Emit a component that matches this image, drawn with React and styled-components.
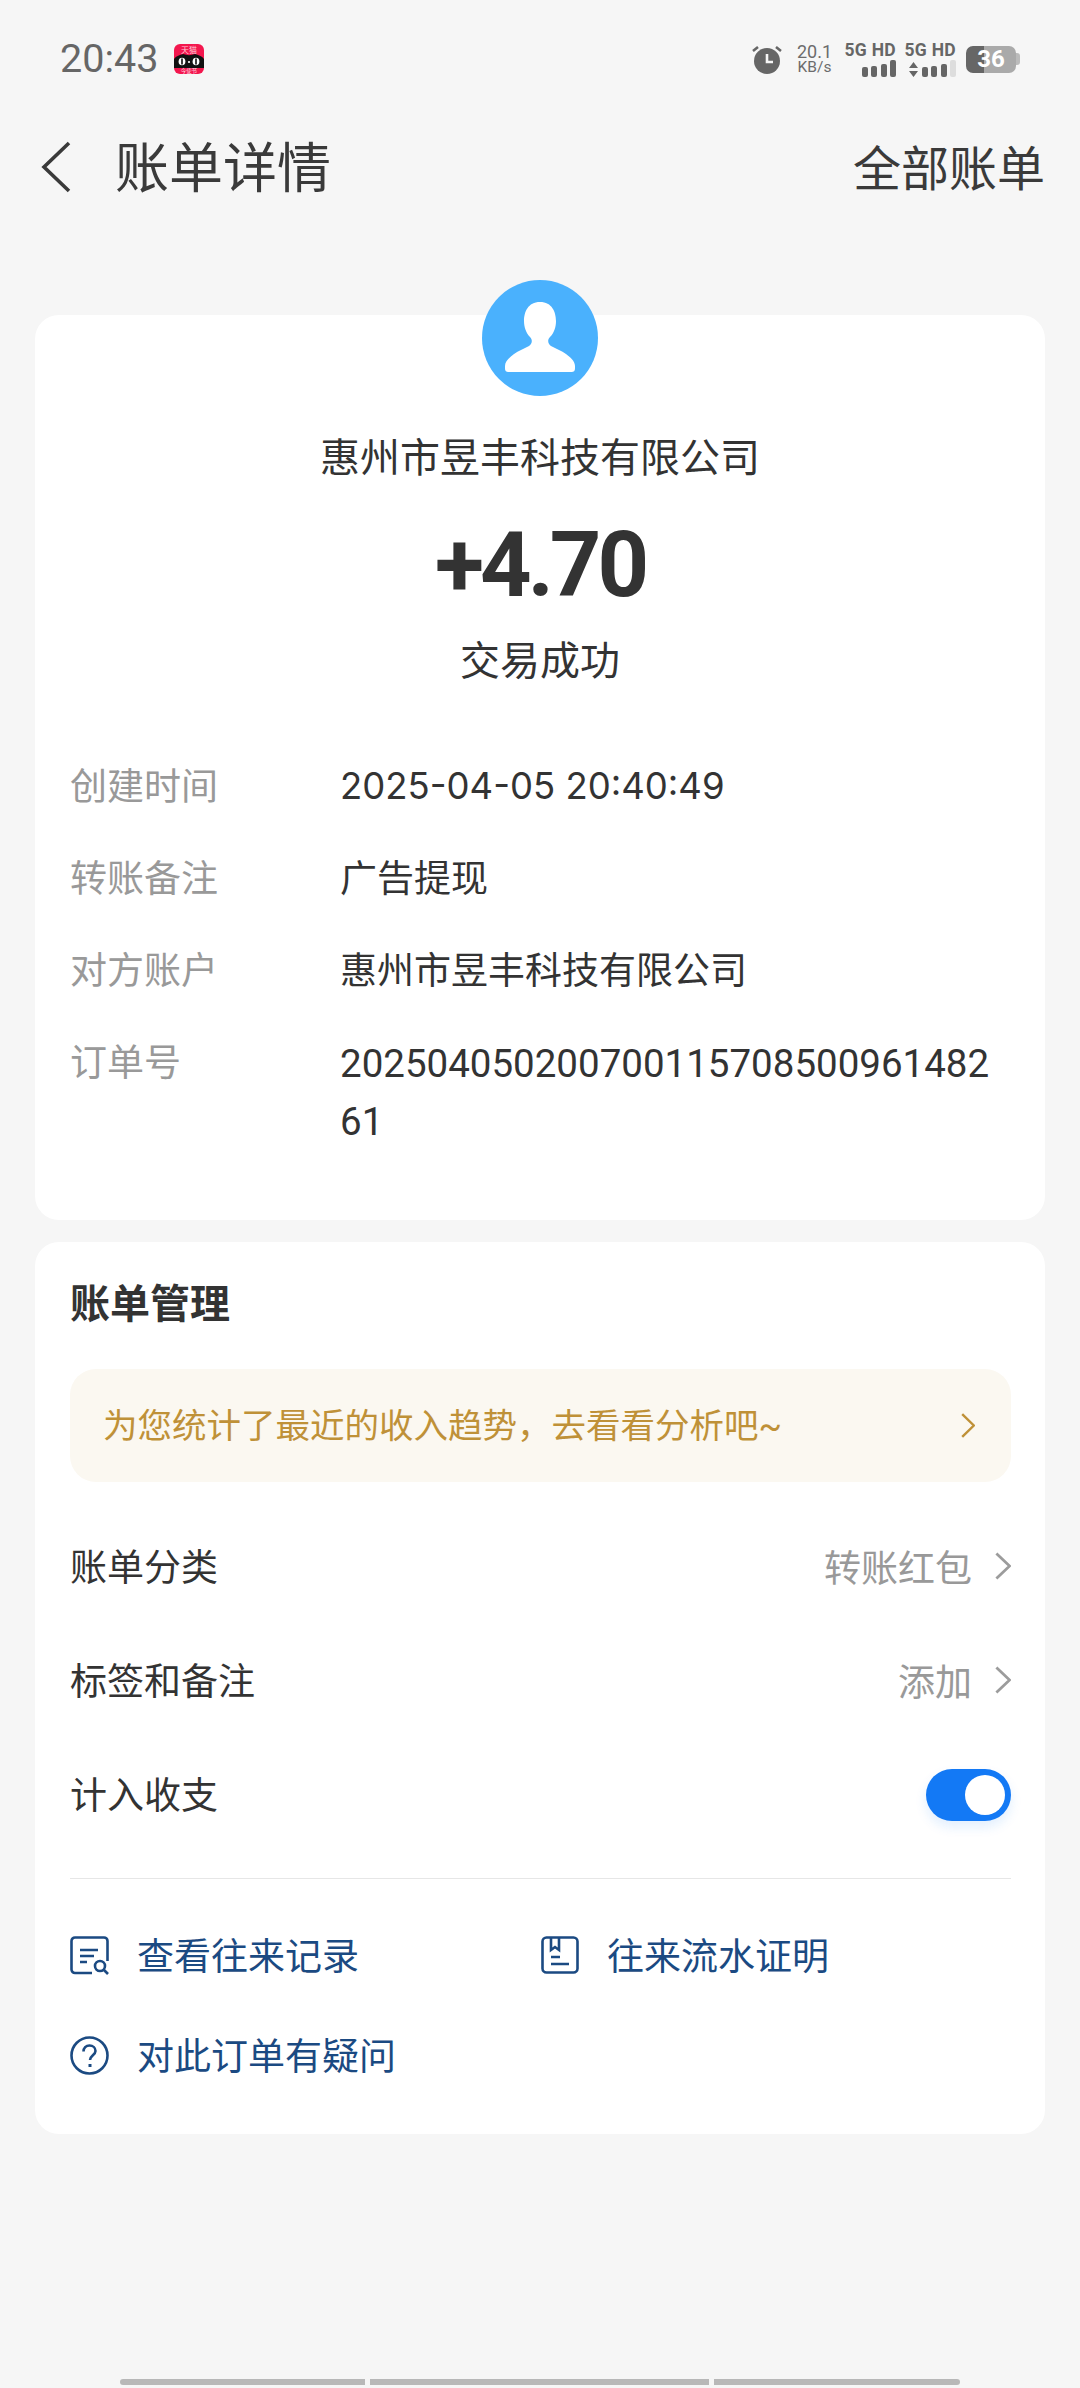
import styled, { createGlobalStyle } from 'styled-components';

const GlobalStyle = createGlobalStyle`
  html, body {
    margin: 0;
    padding: 0;
    background: #f6f6f6;
  }
  * {
    box-sizing: border-box;
  }
  body {
    font-family: Roboto, "Noto Sans CJK SC", sans-serif;
    color: #333;
  }
`

const Page = styled.div`
  width: 1080px;
  height: 2388px;
  display: flex;
  flex-direction: column;
  background: #f6f6f6;
`

const StatusBar = styled.div`
  height: 118px;
  flex-shrink: 0;
  display: flex;
  align-items: center;
  justify-content: space-between;
  padding: 0 60px 0 60px;
`

const StatusLeft = styled.div`
  display: flex;
  align-items: center;
  gap: 16px;
`

const Clock = styled.span`
  font-size: 39.5px;
  line-height: 46px;
  color: #666;
`

const StatusRight = styled.div`
  display: flex;
  align-items: center;
`

const Speed = styled.div`
  margin-left: 14px;
  width: 37px;
  display: flex;
  flex-direction: column;
  color: #6c6c6c;
  font-size: 18px;
  line-height: 17px;
  text-align: center;

  small {
    font-size: 15.5px;
    line-height: 15px;
  }
`

const Network = styled.div`
  width: 48px;
  margin-left: ${props => props.$gap}px;
  display: flex;
  flex-direction: column;
  align-items: flex-end;
  gap: 2px;
`

const NetworkLabel = styled.span`
  font-size: 17.5px;
  line-height: 16px;
  font-weight: 700;
  letter-spacing: 0.3px;
  color: #666;
  white-space: nowrap;
`

const Signal = styled.div`
  display: flex;
  align-items: flex-end;
  gap: 3.5px;
  height: 17px;
`

const SignalBar = styled.i`
  display: block;
  width: 6px;
  height: ${props => props.$h}px;
  border-radius: 2px;
  background: ${props => (props.$off ? '#ddd' : '#666')};
`

const Battery = styled.div`
  margin-left: 10px;
  display: flex;
  align-items: center;
`

const BatteryBody = styled.div`
  width: 50px;
  height: 27px;
  border-radius: 7px;
  background: linear-gradient(90deg, #666 36%, #aaa 36%);
  color: #fff;
  font-size: 24px;
  font-weight: 700;
  line-height: 27px;
  text-align: center;
`

const BatteryTip = styled.i`
  display: block;
  width: 4px;
  height: 12px;
  border-radius: 0 3px 3px 0;
  background: #bbb;
`

const NavBar = styled.div`
  height: 98px;
  flex-shrink: 0;
  display: flex;
  align-items: center;
  padding: 0 35px 0 41px;
`

const Title = styled.div`
  margin-left: 44px;
  flex: 1;
  font-size: 54px;
  line-height: 70px;
  padding-top: 5px;
  color: #3a3a3a;
`

const NavAction = styled.div`
  font-size: 48px;
  line-height: 60px;
  padding-top: 5px;
  color: #3a3a3a;
`

const Card = styled.div`
  position: relative;
  margin: 0 35px;
  border-radius: 24px;
  background: #fff;
`

const DetailCard = styled(Card)`
  margin-top: 99px;
  height: 905px;
  padding: 116px 35px 0;
`

const ManageCard = styled(Card)`
  margin-top: 22px;
  height: 892px;
  padding: 35px 34px 0 35px;
`

const Avatar = styled.div`
  position: absolute;
  top: -35px;
  left: 447px;
  width: 116px;
  height: 116px;
`

const Summary = styled.div`
  display: flex;
  flex-direction: column;
  align-items: center;
`

const Payer = styled.div`
  font-size: 40px;
  line-height: 56px;
`

const Amount = styled.div`
  margin-top: 29px;
  font-size: 90px;
  line-height: 100px;
  font-weight: 700;
  letter-spacing: -4px;
`

const TradeStatus = styled.div`
  margin-top: 18px;
  font-size: 40px;
  line-height: 56px;
`

const InfoList = styled.div`
  margin-top: 69px;
  display: flex;
  flex-direction: column;
  gap: 34px;
`

const InfoRow = styled.div`
  display: grid;
  grid-template-columns: 270px 1fr;
  font-size: 37px;
  line-height: 58px;
`

const InfoLabel = styled.div`
  color: #999;
`

const InfoValue = styled.div`
  color: #333;
  word-break: break-all;
  padding-right: 12px;
`

const DateValue = styled(InfoValue)`
  font-family: Inter, sans-serif;
  font-size: 36.5px;
  line-height: 55px;
`

const OrderValue = styled(InfoValue)`
  font-size: 38.5px;
`

const SectionTitle = styled.div`
  font-size: 40px;
  line-height: 56px;
  font-weight: 700;
`

const Banner = styled.div`
  margin-top: 36px;
  height: 113px;
  padding: 0 36px 0 33px;
  border-radius: 26px;
  display: flex;
  align-items: center;
  justify-content: space-between;
  background: #fbf8f1;
  color: #bf9138;
  font-size: 34.5px;

  span {
    padding-bottom: 6px;
  }
`

const Rows = styled.div`
  margin-top: 28px;
`

const Row = styled.div`
  height: 114px;
  display: flex;
  align-items: center;
  justify-content: space-between;
  font-size: 37px;
`

const RowLabel = styled.span`
  padding-bottom: 4px;
`

const RowValue = styled.div`
  display: flex;
  align-items: center;
  gap: 23px;
  color: #999;
  padding-bottom: 2px;
`

const Toggle = styled.div`
  width: 85px;
  height: 52px;
  padding: 6px;
  border-radius: 26px;
  display: flex;
  justify-content: flex-end;
  background: #1379f5;
  box-shadow: 0 6px 12px rgba(19, 121, 245, 0.12);

  i {
    display: block;
    width: 40px;
    height: 40px;
    border-radius: 50%;
    background: #fff;
  }
`

const Divider = styled.div`
  margin-top: 26px;
  height: 1px;
  background: #e6e6e6;
`

const Links = styled.div`
  margin-top: 26px;
  display: grid;
  grid-template-columns: 471px 1fr;
`

const LinkItem = styled.div`
  height: 100px;
  display: flex;
  align-items: center;
  gap: 28px;
  color: #1b4a82;
  font-size: 37px;

  span {
    padding-bottom: 3px;
  }
`

const HomeBar = styled.div`
  margin-top: auto;
  padding: 0 120px 3px;
  display: flex;
  gap: 5px;
`

const HomeSegment = styled.i`
  display: block;
  height: 6px;
  flex: ${props => props.$grow};
  background: #b8b8b8;
  border-radius: ${props => props.$radius};
`

const Chevron = ({ w, h, color, stroke = 3 }) => (
  <svg width={w} height={h} viewBox={`0 0 ${w} ${h}`} fill="none">
    <path
      d={`M${stroke / 2} ${stroke / 2}L${w - stroke / 2} ${h / 2}L${stroke / 2} ${h - stroke / 2}`}
      stroke={color}
      strokeWidth={stroke}
    />
  </svg>
)

const TmallIcon = () => (
  <svg width="30" height="30" viewBox="0 0 30 30">
    <rect width="30" height="30" rx="6" fill="#f3174e" />
    <path d="M0 15C2 12 6 11 9 10c4 1.500 8 1.500 12 0 3 1 7 2 9 5v9H0z" fill="#111" />
    <ellipse cx="8" cy="17.500" rx="3.400" ry="3.800" fill="#fff" />
    <ellipse cx="22" cy="17.500" rx="3.400" ry="3.800" fill="#fff" />
    <rect x="7.200" y="14.500" width="1.600" height="6" fill="#111" />
    <rect x="21.200" y="14.500" width="1.600" height="6" fill="#111" />
    <circle cx="15" cy="18" r="1.100" fill="#fff" />
    <text x="15" y="9" fontSize="8" fill="#ffc9d6" textAnchor="middle">天猫</text>
    <text x="15" y="29" fontSize="5.500" fill="#ffd9e2" textAnchor="middle">今使节</text>
  </svg>
)

const AlarmIcon = () => (
  <svg width="30" height="29" viewBox="0 0 30 29">
    <circle cx="15" cy="16" r="13" fill="#666" />
    <path d="M15 9v8h6" fill="none" stroke="#f6f6f6" strokeWidth="2.600" />
    <path d="M1 6l5-4M29 6l-5-4" stroke="#666" strokeWidth="2.600" />
  </svg>
)

const UpDownArrows = () => (
  <svg width="9" height="15" viewBox="0 0 9 15">
    <path d="M4.500 0L9 6H0zM0 9h9l-4.500 6z" fill="#666" />
  </svg>
)

const PersonIcon = () => (
  <svg width="116" height="116" viewBox="0 0 116 116">
    <circle cx="58" cy="58" r="58" fill="#4ab1fd" />
    <path
      d="M58 22c-12 0-16 10-16 19 0 6 2 12 6 16 3 3 2 7-1 9-4 2-11 5-15 8-4 3-9 7-9 12v2c0 3 1 4 4 4h62c3 0 4-1 4-4v-2c0-5-5-9-9-12-4-3-11-6-15-8-3-2-4-6-1-9 4-4 6-10 6-16 0-9-4-19-16-19z"
      fill="#fff"
    />
  </svg>
)

const RecordIcon = () => (
  <svg width="39" height="39" viewBox="0 0 39 39" fill="none" stroke="#1b4a82" strokeWidth="2.600">
    <path d="M22 37H5a3.500 3.500 0 0 1-3.500-3.500V5A3.500 3.500 0 0 1 5 1.500h29A3.500 3.500 0 0 1 37.500 5v20" />
    <path d="M10 14h18M10 20h14M10 26h7" />
    <circle cx="30" cy="30" r="5" />
    <path d="M33.500 33.500L38 38" />
  </svg>
)

const ProofIcon = () => (
  <svg width="38" height="38" viewBox="0 0 38 38" fill="none" stroke="#1b4a82" strokeWidth="2.600">
    <rect x="1.500" y="1.500" width="35" height="35" rx="4" />
    <path d="M10 2v12l4-3 4 3V2" />
    <path d="M10 21h9M10 28h18" />
  </svg>
)

const HelpIcon = () => (
  <svg width="39" height="39" viewBox="0 0 39 39" fill="none" stroke="#1b4a82" strokeWidth="2.600">
    <circle cx="19.500" cy="19.500" r="18" />
    <path d="M13.500 15.500c0-3.500 2.500-6 6-6s6 2.500 6 5.500c0 4-5.500 4.500-5.500 9" />
    <path d="M20 28v3" strokeWidth="3" />
  </svg>
)

const App = () => {
  return (
    <Page>
      <GlobalStyle />
      <StatusBar>
        <StatusLeft>
          <Clock>20:43</Clock>
          <TmallIcon />
        </StatusLeft>
        <StatusRight>
          <AlarmIcon />
          <Speed>
            <span>20.1</span>
            <small>KB/s</small>
          </Speed>
          <Network $gap={15}>
            <NetworkLabel>5G HD</NetworkLabel>
            <Signal>
              <SignalBar $h={10} />
              <SignalBar $h={11} />
              <SignalBar $h={13} />
              <SignalBar $h={17} />
            </Signal>
          </Network>
          <Network $gap={12}>
            <NetworkLabel>5G HD</NetworkLabel>
            <Signal>
              <UpDownArrows />
              <SignalBar $h={10} />
              <SignalBar $h={11} />
              <SignalBar $h={13} />
              <SignalBar $h={17} $off />
            </Signal>
          </Network>
          <Battery>
            <BatteryBody>36</BatteryBody>
            <BatteryTip />
          </Battery>
        </StatusRight>
      </StatusBar>

      <NavBar>
        <svg width="30" height="52" viewBox="0 0 30 52" fill="none">
          <path d="M28 2L3 26l25 24" stroke="#3a3a3a" strokeWidth="3.600" />
        </svg>
        <Title>账单详情</Title>
        <NavAction>全部账单</NavAction>
      </NavBar>

      <DetailCard>
        <Avatar>
          <PersonIcon />
        </Avatar>
        <Summary>
          <Payer>惠州市昱丰科技有限公司</Payer>
          <Amount>+4.70</Amount>
          <TradeStatus>交易成功</TradeStatus>
        </Summary>
        <InfoList>
          <InfoRow>
            <InfoLabel>创建时间</InfoLabel>
            <DateValue>2025-04-05 20:40:49</DateValue>
          </InfoRow>
          <InfoRow>
            <InfoLabel>转账备注</InfoLabel>
            <InfoValue>广告提现</InfoValue>
          </InfoRow>
          <InfoRow>
            <InfoLabel>对方账户</InfoLabel>
            <InfoValue>惠州市昱丰科技有限公司</InfoValue>
          </InfoRow>
          <InfoRow>
            <InfoLabel>订单号</InfoLabel>
            <OrderValue>20250405020070011570850096148261</OrderValue>
          </InfoRow>
        </InfoList>
      </DetailCard>

      <ManageCard>
        <SectionTitle>账单管理</SectionTitle>
        <Banner>
          <span>为您统计了最近的收入趋势，去看看分析吧~</span>
          <Chevron w={14} h={25} color="#bf9138" stroke={2.4} />
        </Banner>
        <Rows>
          <Row>
            <RowLabel>账单分类</RowLabel>
            <RowValue>
              转账红包
              <Chevron w={16} h={28} color="#9c9c9c" stroke={2.8} />
            </RowValue>
          </Row>
          <Row>
            <RowLabel>标签和备注</RowLabel>
            <RowValue>
              添加
              <Chevron w={16} h={28} color="#9c9c9c" stroke={2.8} />
            </RowValue>
          </Row>
          <Row>
            <RowLabel>计入收支</RowLabel>
            <Toggle>
              <i />
            </Toggle>
          </Row>
        </Rows>
        <Divider />
        <Links>
          <LinkItem>
            <RecordIcon />
            <span>查看往来记录</span>
          </LinkItem>
          <LinkItem>
            <ProofIcon />
            <span>往来流水证明</span>
          </LinkItem>
          <LinkItem>
            <HelpIcon />
            <span>对此订单有疑问</span>
          </LinkItem>
        </Links>
      </ManageCard>

      <HomeBar>
        <HomeSegment $grow={245} $radius="3px 0 0 3px" />
        <HomeSegment $grow={338} $radius="0" />
        <HomeSegment $grow={246} $radius="0 3px 3px 0" />
      </HomeBar>
    </Page>
  )
}

export default App
